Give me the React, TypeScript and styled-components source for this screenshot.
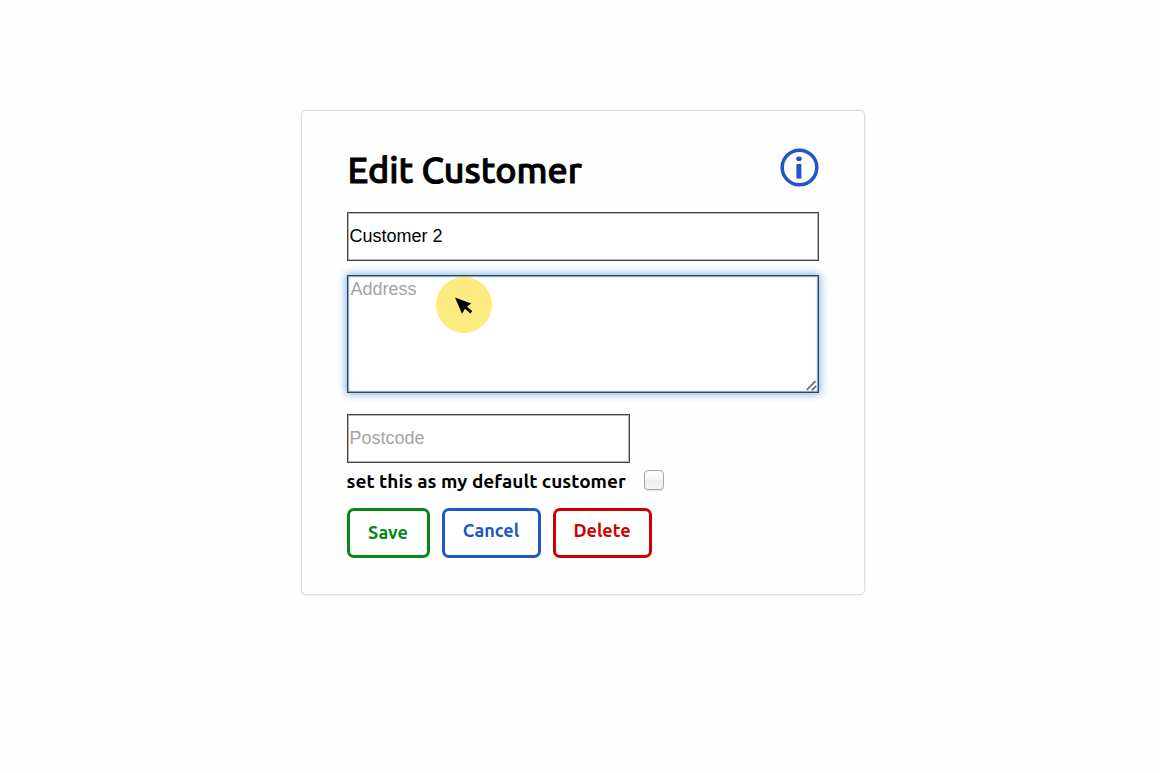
import React from "react";
import styled, { createGlobalStyle } from "styled-components";

const GlobalStyle = createGlobalStyle`
  *, *::before, *::after { box-sizing: border-box; }
  body {
    margin: 0;
    background: #fefefe;
    color: #000;
    font-family: Ubuntu, "Noto Sans", sans-serif;
  }
`;

const Page = styled.main`
  padding: 110px 0 40px 5px;
`;

const Card = styled.form`
  display: flex;
  flex-direction: column;
  width: 100%;
  max-width: 564px;
  margin: 0 auto;
  padding: 36px 45px;
  border: 1px solid #dcdcdc;
  border-radius: 5px;
  box-shadow: 0 0 2px rgba(0, 0, 0, 0.12);
`;

const Header = styled.header`
  display: flex;
  justify-content: space-between;
  align-items: flex-start;
  height: 65px;
`;

const Title = styled.h1`
  margin: 0;
  padding-left: 1px;
  font-size: 36px;
  line-height: 46px;
  font-weight: 500;
  -webkit-text-stroke: 1px currentColor;
`;

const InfoButton = styled.button`
  display: flex;
  margin: 1px 0 0;
  padding: 0;
  border: 0;
  background: none;
  color: #2056c7;
`;

const TextField = styled.input<{ $short?: boolean }>`
  width: ${(p) => (p.$short ? "60%" : "100%")};
  height: 49px;
  padding: 0 2px;
  border: 1px solid #444;
  border-radius: 0;
  outline: 1px solid rgba(68, 68, 68, 0.4);
  outline-offset: -2px;
  background: #fff;
  color: #000;
  font: 18px "Liberation Sans", Arial, sans-serif;
  &::placeholder { color: #a3a3a3; opacity: 1; }
`;

const AddressField = styled.div`
  position: relative;
  margin: 14px 0 21px;
`;

const TextArea = styled.textarea`
  display: block;
  width: 100%;
  height: 118px;
  padding: 3px;
  border: 1px solid #3c444c;
  border-radius: 0;
  outline: 1px solid rgba(68, 100, 130, 0.5);
  outline-offset: -2px;
  background: #fff;
  box-shadow: 0 0 8px 1px #74b4ea, inset 0 0 3px #74b4ea;
  resize: none;
  font: 18px/21px "Liberation Sans", Arial, sans-serif;
  &::placeholder { color: #a3a3a3; opacity: 1; }
`;

const Grip = styled.svg`
  position: absolute;
  right: 2px;
  bottom: 2px;
  pointer-events: none;
`;

const Pointer = styled.div`
  position: absolute;
  top: 2px;
  left: 89px;
  display: flex;
  width: 56px;
  height: 56px;
  border-radius: 50%;
  background: #fbeb80;
  pointer-events: none;
`;

const DefaultRow = styled.label`
  display: flex;
  align-items: center;
  gap: 18px;
  height: 35px;
  font-size: 19px;
  line-height: 24px;
  font-weight: 700;
`;

const Checkbox = styled.input`
  appearance: none;
  width: 20px;
  height: 20px;
  margin: 0 0 1px;
  border: 1px solid #a6a6a6;
  border-radius: 4px;
  background: linear-gradient(#fdfdfd, #f6f6f6 45%, #ececec 50%, #f4f4f4);
  box-shadow: 0 1px 1px rgba(0, 0, 0, 0.12);
`;

const Actions = styled.div`
  display: flex;
  gap: 12px;
  margin-top: 10px;
`;

const ActionButton = styled.button<{ $color: string; $wide?: boolean }>`
  width: ${(p) => (p.$wide ? 99 : 83)}px;
  height: 50px;
  padding: ${(p) => (p.$wide ? "0 0 6px" : "0 0 3px")};
  border: 3px solid ${(p) => p.$color};
  border-radius: 7px;
  background: #fff;
  color: ${(p) => p.$color};
  font-family: inherit;
  font-size: 18px;
  line-height: 24px;
  font-weight: 700;
`;

export default function App() {
  return (
    <>
      <GlobalStyle />
      <Page>
        <Card onSubmit={(e) => e.preventDefault()}>
          <Header>
            <Title>Edit Customer</Title>
            <InfoButton type="button" aria-label="Information">
              <svg width="39" height="39" viewBox="0 0 39 39" aria-hidden="true">
                <circle cx="19.5" cy="19.5" r="17.3" fill="none" stroke="currentColor" strokeWidth="3.5" />
                <ellipse cx="19" cy="10.8" rx="2.8" ry="2.3" fill="currentColor" />
                <rect x="16.4" y="16" width="5" height="14.6" fill="currentColor" />
              </svg>
            </InfoButton>
          </Header>
          <TextField type="text" aria-label="Name" defaultValue="Customer 2" />
          <AddressField>
            <TextArea aria-label="Address" placeholder="Address" />
            <Grip width="11" height="11" viewBox="0 0 11 11" aria-hidden="true">
              <path d="M0.7 10 L9.5 1.2 M5.8 10.3 L10.2 5.9" stroke="#666" strokeWidth="1.7" fill="none" />
            </Grip>
            <Pointer>
              <svg width="56" height="56" viewBox="0 0 56 56" aria-hidden="true">
                <path d="M19 20.5 L35.3 26.5 L31 29.5 L36.3 34.3 L34.3 36.5 L29 31.7 L26 36.8 Z" fill="#000" />
              </svg>
            </Pointer>
          </AddressField>
          <TextField $short type="text" aria-label="Postcode" placeholder="Postcode" />
          <DefaultRow>
            set this as my default customer
            <Checkbox type="checkbox" />
          </DefaultRow>
          <Actions>
            <ActionButton type="submit" $color="#07861c">Save</ActionButton>
            <ActionButton type="button" $wide $color="#2056c7">Cancel</ActionButton>
            <ActionButton type="button" $wide $color="#cc0000">Delete</ActionButton>
          </Actions>
        </Card>
      </Page>
    </>
  );
}
